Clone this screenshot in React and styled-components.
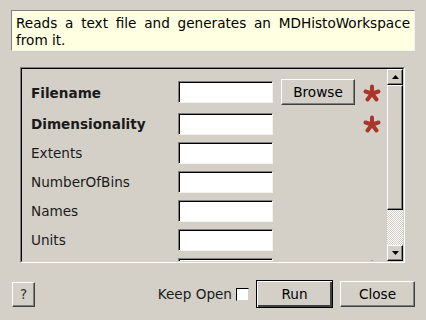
import React from 'react';
import styled, { createGlobalStyle, css } from 'styled-components';

const Global = createGlobalStyle`
  html, body { margin: 0; padding: 0; background: #d4d0c8; }
  body { font-family: "DejaVu Sans", "Liberation Sans", sans-serif; font-size: 13.6px; color: #000; }
`;

const Dialog = styled.div`
  width: 426px;
  height: 320px;
  box-sizing: border-box;
  padding: 10px 11px 0 11px;
  display: flex;
  flex-direction: column;
  overflow: hidden;
`;

const Description = styled.div`
  height: 41px;
  box-sizing: border-box;
  background: #ffffe1;
  border-top: 1px solid #808080;
  border-left: 1px solid #808080;
  border-right: 1px solid #f4f2ee;
  border-bottom: 1px solid #f4f2ee;
  padding: 4px 4px 0 4px;
  line-height: 17px;
  text-align: justify;
  overflow: hidden;
`;

const Sunken = css`
  border-top: 1px solid #808080;
  border-left: 1px solid #808080;
  border-right: 1px solid #fff;
  border-bottom: 1px solid #fff;
`;

const ScrollFrame = styled.div`
  margin: 16px 10px 0 9px;
  height: 196px;
  box-sizing: border-box;
  ${Sunken};
  display: flex;
`;

const ScrollInner = styled.div`
  flex: 1;
  display: flex;
  border-top: 1px solid #000;
  border-left: 1px solid #000;
  border-right: 1px solid #d4d0c8;
  border-bottom: 1px solid #d4d0c8;
  min-height: 0;
`;

const Viewport = styled.div`
  flex: 1;
  overflow: hidden;
  padding: 10px 0 0 9px;
  box-sizing: border-box;
`;

const Form = styled.div`
  display: grid;
  grid-template-columns: 147px 95px 8px 74px 30px;
  grid-template-rows: 27px;
  grid-auto-rows: 22px;
  row-gap: 7px;
  align-items: center;
`;

const Label = styled.div`
  grid-column: 1;
  font-weight: ${p => (p.$bold ? 'bold' : 'normal')};
  color: #1a1a1a;
  white-space: nowrap;
`;

const Input = styled.div`
  grid-column: 2;
  height: 22px;
  box-sizing: border-box;
  background: #fff;
  ${Sunken};
  border-right-color: #f4f2ee;
  border-bottom-color: #f4f2ee;
  box-shadow: inset 1px 1px 0 #000;
  align-self: ${p => (p.$top ? 'start' : 'center')};
  margin-top: ${p => (p.$top ? '2px' : '0')};
`;

const RaisedButton = styled.button`
  font-family: inherit;
  font-size: 13.6px;
  color: #000;
  background: #d4d0c8;
  box-sizing: border-box;
  padding: 0;
  border-top: 1px solid #fff;
  border-left: 1px solid #fff;
  border-right: 1px solid #404040;
  border-bottom: 1px solid #404040;
  box-shadow: inset -1px -1px 0 #808080;
  ${p => p.$default && css`
    border: 1px solid #000;
    box-shadow: inset 1px 1px 0 #fff, inset -2px -2px 0 #404040;
  `}
`;

const BrowseButton = styled(RaisedButton)`
  grid-column: 4;
  width: 74px;
  height: 26px;
  align-self: start;
`;

const Star = styled.div`
  grid-column: 5;
  display: flex;
  justify-content: center;
  padding-left: 3px;
  align-self: ${p => (p.$top ? 'start' : 'center')};
  margin-top: ${p => (p.$top ? '5px' : '0')};
`;

const Scrollbar = styled.div`
  width: 16px;
  display: flex;
  flex-direction: column;
`;

const ArrowButton = styled.div`
  width: 16px;
  height: 16px;
  box-sizing: border-box;
  background: #d4d0c8;
  border-top: 1px solid #fff;
  border-left: 1px solid #fff;
  border-right: 1px solid #000;
  border-bottom: 1px solid #000;
  box-shadow: inset -1px -1px 0 #808080;
  display: flex;
  align-items: center;
  justify-content: center;
`;

const Handle = styled(ArrowButton)`
  height: 125px;
`;

const Track = styled.div`
  flex: 1;
  background-color: #fff;
  background-image: conic-gradient(#d4d0c8 25%, #fff 0 50%, #d4d0c8 0 75%, #fff 0);
  background-size: 2px 2px;
`;

const Footer = styled.div`
  display: flex;
  align-items: center;
  margin-top: 17px;
  height: 28px;
`;

const HelpButton = styled(RaisedButton)`
  width: 23px;
  height: 25px;
  margin-left: 1px;
  color: #333;
`;

const Spacer = styled.div`
  flex: 1;
`;

const KeepOpen = styled.label`
  display: flex;
  align-items: center;
  gap: 4px;
  color: #1a1a1a;
  margin-right: 7px;
`;

const Check = styled.span`
  width: 13px;
  height: 13px;
  box-sizing: border-box;
  background: #fff;
  border-top: 1px solid #000;
  border-left: 1px solid #000;
  border-right: 1px solid #d4d0c8;
  border-bottom: 1px solid #d4d0c8;
  display: inline-block;
`;

const ActionButton = styled(RaisedButton)`
  width: ${p => (p.$default ? '77px' : '75px')};
  height: ${p => (p.$default ? '28px' : '26px')};
  margin-left: ${p => p.$gap || '0'};
`;

const Asterisk = () => (
  <svg width="18" height="18" viewBox="0 0 18 18">
    <g stroke="#a8372a" strokeWidth="4" strokeLinecap="round">
      <line x1="9" y1="9.5" x2="9" y2="2.5" />
      <line x1="9" y1="9.5" x2="2.5" y2="7.5" />
      <line x1="9" y1="9.5" x2="15.5" y2="7.5" />
      <line x1="9" y1="9.5" x2="4.5" y2="15.5" />
      <line x1="9" y1="9.5" x2="13.5" y2="15.5" />
    </g>
  </svg>
);

const Arrow = ({ down }) => (
  <svg width="7" height="4" viewBox="0 0 7 4">
    <polygon points={down ? '0,0 7,0 3.5,4' : '0,4 7,4 3.5,0'} fill="#000" />
  </svg>
);

const fields = [
  { name: 'Filename', bold: true, browse: true, required: true },
  { name: 'Dimensionality', bold: true, required: true },
  { name: 'Extents' },
  { name: 'NumberOfBins' },
  { name: 'Names' },
  { name: 'Units' },
  { name: '', required: true },
];

export default function App() {
  return (
    <Dialog>
      <Global />
      <Description>Reads a text file and generates an MDHistoWorkspace from it.</Description>
      <ScrollFrame>
        <ScrollInner>
          <Viewport>
            <Form>
              {fields.map((f, i) => (
                <React.Fragment key={i}>
                  <Label $bold={f.bold}>{f.name}</Label>
                  <Input $top={i === 0} />
                  {f.browse && <BrowseButton>Browse</BrowseButton>}
                  {f.required && (
                    <Star $top={i === 0}>
                      <Asterisk />
                    </Star>
                  )}
                </React.Fragment>
              ))}
            </Form>
          </Viewport>
          <Scrollbar>
            <ArrowButton><Arrow /></ArrowButton>
            <Handle />
            <Track />
            <ArrowButton><Arrow down /></ArrowButton>
          </Scrollbar>
        </ScrollInner>
      </ScrollFrame>
      <Footer>
        <HelpButton>?</HelpButton>
        <Spacer />
        <KeepOpen>Keep Open <Check /></KeepOpen>
        <ActionButton $default>Run</ActionButton>
        <ActionButton $gap="7px">Close</ActionButton>
      </Footer>
    </Dialog>
  );
}
